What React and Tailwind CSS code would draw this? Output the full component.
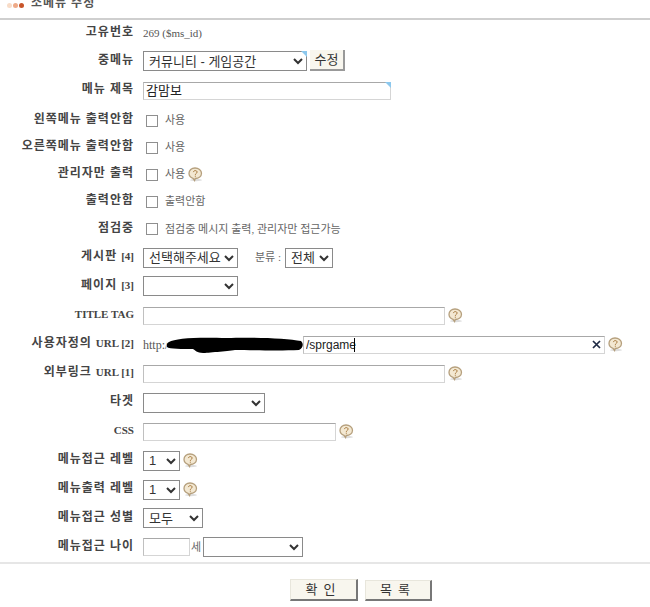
import { useState } from "react";

const font = "font-['Liberation_Serif','Noto_Sans_CJK_KR',serif]";
const ctrlFont = "font-['Liberation_Sans','Noto_Sans_CJK_KR',sans-serif]";

function Help() {
  return (
    <svg width="15" height="15" viewBox="0 0 15 15" className="ml-[3px] shrink-0">
      <ellipse cx="8" cy="13" rx="6" ry="1.2" fill="#ddd" />
      <path d="M7 1C3.5 1 1 3.4 1 6.3c0 2.4 1.7 4.3 4 5l1.6 2.2.6-2C10.8 11.4 13.5 9.200 13.500 6.300 13.500 3.400 10.500 1 7 1z" fill="#f3e8d2" stroke="#b59f7c" strokeWidth="1.300" />
      <path d="M5.400 5.100c.2-1 1-1.500 1.900-1.500 1 0 1.800.6 1.800 1.500 0 1.300-1.800 1.300-1.800 2.700" fill="none" stroke="#a5763a" strokeWidth="1" />
      <rect x="6.800" y="8.700" width="1" height="1" fill="#a5763a" />
    </svg>
  );
}

function Corner() {
  return (
    <span className="absolute top-0 right-0 w-0 h-0 border-t-[6px] border-l-[6px] border-t-[#8cc8ee] border-l-transparent" />
  );
}

function Latin({ children }) {
  return <span className="text-[11px] tracking-normal">{children}</span>;
}

function Row({ label, h, children }) {
  return (
    <div className={`flex items-center ${h}`}>
      <div className={`w-[134px] shrink-0 text-right text-[12px] tracking-[1px] font-bold text-[#444] whitespace-nowrap ${font} -mt-[3px]`}>{label}</div>
      <div className="ml-[9px] flex items-center min-w-0">{children}</div>
    </div>
  );
}

function Check({ text, help }) {
  return (
    <div className="flex items-center">
      <input type="checkbox" className="ml-[3px] w-[12px] h-[12px] m-0 appearance-none bg-white border border-[#8f8f8f]" />
      <span className={`ml-[7px] text-[11px] text-[#666] ${font}`}>{text}</span>
      {help && <Help />}
    </div>
  );
}

function Select({ w, h = "h-[20px]", options = [""], corner }) {
  return (
    <div className={`relative ${w} shrink-0`}>
      <select className={`block w-full ${h} border border-[#8a8a8a] bg-white text-[13px] text-[#333] pl-[1px] ${ctrlFont}`}>
        {options.map((o) => (
          <option key={o}>{o}</option>
        ))}
      </select>
      {corner && <Corner />}
    </div>
  );
}

function Text({ w, value, onChange, corner, size = "text-[13px]", className = "" }) {
  return (
    <div className={`relative ${w} shrink-0`}>
      <input
        type="text"
        value={value ?? ""}
        onChange={(e) => onChange && onChange(e.target.value)}
        className={`block w-full h-[18px] border border-[#d5d5d5] border-t-[#a8a8a8] border-l-[#c0c0c0] bg-white px-[2px] text-[#222] outline-none ${size} ${ctrlFont} ${className}`}
      />
      {corner && <Corner />}
    </div>
  );
}

function Button({ label, strong }) {
  return (
    <button
      type="button"
      className={`flex items-center justify-center bg-[#f8f6ee] border border-[#e8e6dc] border-r-2 border-b-2 border-r-[#777] border-b-[#777] text-[13px] text-[#333] tracking-[6px] ${ctrlFont} ${
        strong ? "w-[68px] h-[22px] border-[#444] border-r-[#444] border-b-[#444]" : "w-[67px] h-[21px]"
      }`}
    >
      {label}
    </button>
  );
}

export default function App() {
  const [title, setTitle] = useState("감맘보");
  const [url, setUrl] = useState("/sprgame");

  return (
    <div className="w-[650px] h-[607px] overflow-hidden bg-white">
      {/* header, cropped at the top */}
      <div className="h-[18px] flex items-end overflow-hidden pb-[8px] pl-[7px]">
        <span className="flex items-center gap-[1px] mb-[2px]">
          <span className="w-[5px] h-[5px] rounded-full bg-[#f8dcc8]" />
          <span className="w-[5px] h-[5px] rounded-full bg-[#eeaa88]" />
          <span className="w-[5px] h-[5px] rounded-full bg-[#c8552a]" />
        </span>
        <span className={`ml-[7px] text-[12px] leading-[14px] tracking-[1px] font-bold text-[#555] ${font}`}>소메뉴 수정</span>
      </div>
      <div className="h-[2px] bg-[#cfcfcf]" />

      <div className="flex flex-col">
        <Row label="고유번호" h="h-[27px]">
          <span className={`text-[11px] text-[#555] ${font}`}>269 ($ms_id)</span>
        </Row>
        <Row label="중메뉴" h="h-[28px]">
          <Select w="w-[164px]" options={["커뮤니티 - 게임공간"]} corner />
          <div className="ml-[3px]">
            <button type="button" className={`w-[35px] h-[21px] -mt-[2px] block bg-[#f8f6ee] border-r-2 border-b-2 border-r-[#999] border-b-[#999] text-[13px] text-[#333] ${ctrlFont}`}>수정</button>
          </div>
        </Row>
        <Row label="메뉴 제목" h="h-[31px]">
          <Text w="w-[248px]" value={title} onChange={setTitle} corner />
        </Row>
        <Row label="왼쪽메뉴 출력안함" h="h-[29px]"><Check text="사용" /></Row>
        <Row label="오른쪽메뉴 출력안함" h="h-[25px]"><Check text="사용" /></Row>
        <Row label="관리자만 출력" h="h-[29px]"><Check text="사용" help /></Row>
        <Row label="출력안함" h="h-[25px]"><Check text="출력안함" /></Row>
        <Row label="점검중" h="h-[30px]"><Check text="점검중 메시지 출력, 관리자만 접근가능" /></Row>
        <Row label={<>게시판 <Latin>[4]</Latin></>} h="h-[27px]">
          <Select w="w-[95px]" options={["선택해주세요"]} />
          <span className={`ml-[17px] mr-[4px] text-[11px] text-[#666] ${font}`}>분류 :</span>
          <Select w="w-[48px]" options={["전체"]} />
        </Row>
        <Row label={<>페이지 <Latin>[3]</Latin></>} h="h-[30px]">
          <Select w="w-[95px]" />
        </Row>
        <Row label={<Latin>TITLE TAG</Latin>} h="h-[29px]">
          <Text w="w-[302px]" />
          <Help />
        </Row>
        <Row label={<>사용자정의 <Latin>URL [2]</Latin></>} h="h-[29px]">
          <span className={`w-[24px] shrink-0 text-[12px] text-[#555] overflow-hidden ${font}`}>http:/</span>
          <svg width="136" height="18" viewBox="0 0 136 18" className="shrink-0">
            <path d="M2 6C8 2 30 1 60 2c22-1 60 0 74 3 3 3 2 7-2 9-20 1-50 0-64 0-8 1-28 3-32 3-6 0-8-3-10-4-10 0-24 0-26-2C-1 9 0 7 2 6z" fill="#000" />
          </svg>
          <div className="relative w-[302px] shrink-0">
            <Text w="w-full" value={url} onChange={setUrl} size="text-[12px]" className="pr-[16px] caret-black" />
            <span className="absolute right-[3px] top-[3px] w-[11px] h-[11px]">
              <svg width="11" height="11" viewBox="0 0 11 11"><path d="M2 2l7 7M9 2l-7 7" stroke="#1f2a44" strokeWidth="1.700" /></svg>
            </span>
            <span className="absolute left-[51px] top-[2px] w-[1px] h-[14px] bg-black" />
          </div>
          <Help />
        </Row>
        <Row label={<>외부링크 <Latin>URL [1]</Latin></>} h="h-[29px]">
          <Text w="w-[302px]" />
          <Help />
        </Row>
        <Row label="타겟" h="h-[29px]">
          <Select w="w-[122px]" />
        </Row>
        <Row label={<Latin>CSS</Latin>} h="h-[29px]">
          <Text w="w-[193px]" />
          <Help />
        </Row>
        <Row label="메뉴접근 레벨" h="h-[29px]">
          <Select w="w-[37px]" options={["1"]} />
          <Help />
        </Row>
        <Row label="메뉴출력 레벨" h="h-[29px]">
          <Select w="w-[37px]" options={["1"]} />
          <Help />
        </Row>
        <Row label="메뉴접근 성별" h="h-[28px]">
          <Select w="w-[60px]" options={["모두"]} />
        </Row>
        <Row label="메뉴접근 나이" h="h-[30px]">
          <Text w="w-[47px]" />
          <span className={`ml-[1px] w-[12px] text-[11px] text-[#666] ${font}`}>세</span>
          <Select w="w-[100px]" />
        </Row>
      </div>

      <div className="h-[2px] bg-[#e6e6e6]" />
      <div className="flex items-center gap-[7px] mt-[15px] pl-[290px]">
        <Button label="확인" strong />
        <Button label="목록" />
      </div>
    </div>
  );
}
